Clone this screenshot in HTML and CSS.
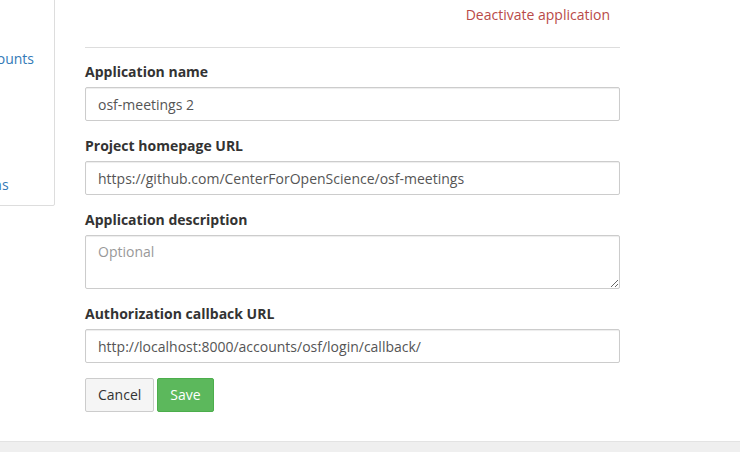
FILE: index.html
```html
<!DOCTYPE html>
<html>
<head>
<meta charset="utf-8">
<link rel="stylesheet" href="styles.css">
</head>
<body>
<div class="page">
  <aside class="sidebar">
    <div class="panel">
      <ul class="nav">
        <li><a href="#">Account settings</a></li>
        <li><a href="#">Configure add-on accounts</a></li>
        <li><a href="#">Notifications</a></li>
        <li><a href="#">Developer apps</a></li>
        <li><a href="#">Personal access tokens</a></li>
      </ul>
    </div>
  </aside>
  <main class="main">
    <div class="top-actions"><a href="#" class="danger">Deactivate application</a></div>
    <hr class="rule">
    <form class="form">
      <div class="group">
        <label class="label">Application name</label>
        <input class="control" type="text" value="osf-meetings 2">
      </div>
      <div class="group">
        <label class="label">Project homepage URL</label>
        <input class="control" type="text" value="https://github.com/CenterForOpenScience/osf-meetings">
      </div>
      <div class="group">
        <label class="label">Application description</label>
        <textarea class="control area" rows="2" placeholder="Optional"></textarea>
      </div>
      <div class="group">
        <label class="label">Authorization callback URL</label>
        <input class="control" type="text" value="http://localhost:8000/accounts/osf/login/callback/">
      </div>
      <div class="buttons">
        <button type="button" class="btn btn-default">Cancel</button>
        <button type="button" class="btn btn-success">Save</button>
      </div>
    </form>
  </main>
</div>
<footer class="footer"></footer>
</body>
</html>
```

FILE: styles.css
```css
* { box-sizing: border-box; }
html, body { margin: 0; padding: 0; }
body {
  font-family: "Open Sans", "Noto Sans", sans-serif;
  font-size: 14px;
  line-height: 20px;
  color: #333;
  background: #fff;
  height: 452px;
  overflow: hidden;
}
.page {
  display: flex;
  align-items: flex-start;
  height: 441px;
}
.sidebar {
  width: 228px;
  margin-left: -173px;
  flex: none;
}
.panel {
  border: 1px solid #ddd;
  border-radius: 0 0 2px 2px;
  margin-top: -21px;
  padding: 15px 15px 0;
}
.nav {
  list-style: none;
  margin: 0;
  padding: 0;
}
.nav li { margin-top: 2px; }
.nav a {
  display: block;
  padding: 10px 15px;
  color: #337ab7;
  text-decoration: none;
  white-space: nowrap;
}
.main {
  width: 535px;
  margin-left: 30px;
  flex: none;
}
.top-actions {
  text-align: right;
  padding: 5px 10px 0 0;
}
.danger {
  color: #b94a48;
  text-decoration: none;
}
.rule {
  border: 0;
  border-top: 1px solid #ddd;
  margin: 22px 0 14px;
}
.form { margin: 0; }
.group { margin-bottom: 15px; }
.label {
  display: block;
  font-weight: 700;
  margin-bottom: 5px;
}
.control {
  display: block;
  width: 100%;
  height: 34px;
  padding: 6px 12px;
  font-family: inherit;
  font-size: 14px;
  line-height: 20px;
  color: #555;
  background: #fff;
  border: 1px solid #ccc;
  border-radius: 2px;
  box-shadow: inset 0 1px 1px rgba(0,0,0,0.075);
}
.area {
  height: 54px;
  resize: vertical;
}
.area::placeholder { color: #999; }
.buttons {
  display: flex;
  gap: 3px;
}
.btn {
  font-family: inherit;
  font-size: 14px;
  line-height: 20px;
  padding: 6px 12px;
  border: 1px solid;
  border-radius: 2px;
  height: 34px;
}
.btn-default {
  background: #f5f5f5;
  border-color: #ccc;
  color: #333;
}
.btn-success {
  background: #5cb85c;
  border-color: #4cae4c;
  color: #fff;
}
.footer {
  height: 11px;
  background: #efefef;
  border-top: 1px solid #e3e3e3;
}
```
